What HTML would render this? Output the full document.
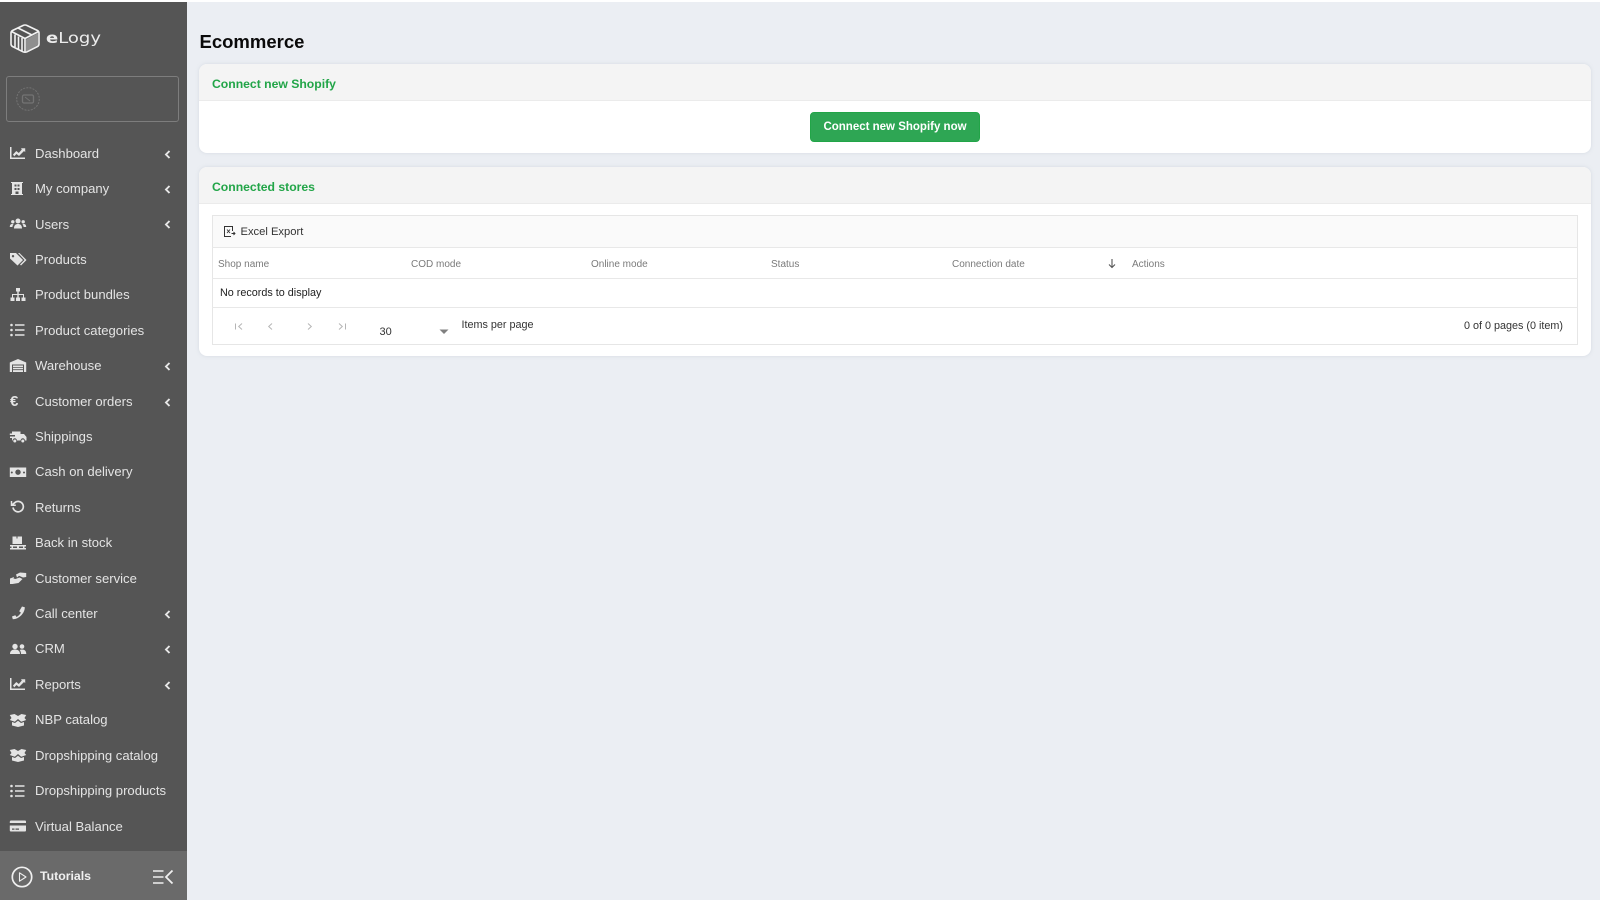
<!DOCTYPE html>
<html><head><meta charset="utf-8"><title>Ecommerce</title>
<style>
html,body{margin:0;padding:0;width:1600px;height:900px;overflow:hidden;background:#fff;font-family:"Liberation Sans",sans-serif}
#wrap{position:absolute;left:0;top:0;width:1600px;height:900px;filter:blur(.3px)}
#bg{position:absolute;left:187px;top:2px;width:1413px;height:898px;background:#ebeef3}
#side{position:absolute;left:0;top:2px;width:187px;height:898px;background:#555}
.a{position:absolute;white-space:nowrap}
.m{position:absolute;left:35px;margin-top:1px;color:#e4e4e4;font-size:13.1px;line-height:16px;white-space:nowrap}
.i{position:absolute;left:9px;width:18px;height:18px;fill:#e4e4e4;stroke:none}
.c{position:absolute;left:164px;width:7px;height:9px;fill:none;stroke:#e8e8e8;stroke-width:1.9}
.card{position:absolute;left:199px;width:1392px;background:#fff;border-radius:8px;box-shadow:0 0 3px rgba(190,198,210,.5);overflow:hidden}
.ch{position:absolute;left:0;top:0;width:100%;background:#f4f4f4;border-bottom:1px solid #ebebeb;box-sizing:border-box}
.g{color:#22a548;font-size:12.2px;font-weight:bold;line-height:16px;position:absolute;white-space:nowrap}
.h{position:absolute;font-size:10px;color:#7a7a7a;line-height:12px;white-space:nowrap}
.l{position:absolute;background:#e8e8e8;height:1px;left:212px;width:1366px}
</style></head><body>
<div id="wrap">
<div id="bg"></div>
<div id="side"></div>

<svg class="a" style="left:9px;top:23px" width="32" height="31" viewBox="0 0 32 31" fill="none" stroke="#f2f2f2" stroke-width="1.600" stroke-linejoin="round"><path d="M17 16.500 29 10V22L17 28.500Z" fill="#8f8f8f" stroke="none"/><path d="M14 2.500Q16 1.500 18 2.500L28.500 7.500Q30 8.300 30 10V21Q30 22.700 28.500 23.500L18 28.800Q16 29.700 14 28.800L3.500 23.500Q2 22.700 2 21V10Q2 8.300 3.500 7.500Z"/><path d="M2.500 8.500 16 15.500 29.500 8.500M16 15.500V29"/><path d="M9 5 23 12M6 11.500V24M9.500 13.500V26M13 15V28"/></svg>
<div class="a" style="left:46px;top:28px;font-family:'DejaVu Sans',sans-serif;color:#ececec;font-size:15.500px;line-height:20px;transform-origin:0 50%;transform:scaleX(1.160)"><b>e</b>Logy</div>

<div class="a" style="left:6px;top:76px;width:173px;height:46px;box-sizing:border-box;border:1px solid #7d7d7d;border-radius:3px"></div>
<svg class="a" style="left:15px;top:87px" width="26" height="26" viewBox="0 0 26 26" fill="none" stroke="#737373"><circle cx="13" cy="12" r="11.300" stroke-dasharray="2 1.200"/><rect x="7.500" y="8" width="11" height="8" rx="1.500" stroke-width="1.300"/><path d="M10 10l5 4" /></svg>

<div class="m" style="top:145px">Dashboard</div>
<svg class="i" style="top:144px" viewBox="0 0 18 18"><path d="M1 3h1.500v10.500H16V15H1Z"/><path d="M4 10.500 7.300 7l2.500 2 3-3.500L12 4.300h4.200v3.800L15 7l-5 5-2.500-2-2.300 2.400Z"/></svg>
<svg class="c" style="top:150px" viewBox="0 0 7 9"><path d="M5.500 1 2 4.500 5.500 8"/></svg>

<div class="m" style="top:180px">My company</div>
<svg class="i" style="top:180px" viewBox="0 0 18 18"><path fill-rule="evenodd" d="M2 2h12v1H13v11h1v1H2v-1h1V3H2ZM5.500 4.500v2h2v-2Zm3 0v2h2v-2Zm-3 3.500v2h2V8Zm3 0v2h2V8ZM6.500 11.500V14h3v-2.500Z"/></svg>
<svg class="c" style="top:185px" viewBox="0 0 7 9"><path d="M5.500 1 2 4.500 5.500 8"/></svg>

<div class="m" style="top:216px">Users</div>
<svg class="i" style="top:215px" viewBox="0 0 18 18"><circle cx="9" cy="6" r="2.500"/><circle cx="3.800" cy="6.800" r="1.700"/><circle cx="14.200" cy="6.800" r="1.700"/><path d="M5 13.500c0-3.300 1.700-4.500 4-4.500s4 1.200 4 4.500ZM.8 12c0-2 .9-3 2.400-3 .6 0 1 .2 1.400.4-.7.700-1.100 1.500-1.200 2.600ZM17.200 12c0-2-.9-3-2.400-3-.6 0-1 .2-1.400.4.700.700 1.100 1.500 1.200 2.600Z"/></svg>
<svg class="c" style="top:220px" viewBox="0 0 7 9"><path d="M5.500 1 2 4.500 5.500 8"/></svg>

<div class="m" style="top:251px">Products</div>
<svg class="i" style="top:250px" viewBox="0 0 18 18"><path fill-rule="evenodd" d="M1 3h6l7 7-5.500 5.500L1 8.500ZM4 5a1.200 1.200 0 1 0 .01 0Z"/><path d="M9 3h1.500l7 7-5.500 5.500-1-1L15.500 10Z"/></svg>

<div class="m" style="top:286px">Product bundles</div>
<svg class="i" style="top:286px" viewBox="0 0 18 18"><path d="M7 2h4v3.500H9.700V8H15v3.500h1.500V15h-4v-3.500H14V9H9.700v2.500H11V15H7v-3.500h1.300V9H4v2.500h1.500V15h-4v-3.500H3V8h5.300V5.500H7Z"/></svg>

<div class="m" style="top:322px">Product categories</div>
<svg class="i" style="top:321px" viewBox="0 0 18 18"><circle cx="2.500" cy="4" r="1.300"/><circle cx="2.500" cy="9" r="1.300"/><circle cx="2.500" cy="14" r="1.300"/><path d="M6 3.200h9.500v1.600H6ZM6 8.200h9.500v1.600H6ZM6 13.200h9.500v1.600H6Z"/></svg>

<div class="m" style="top:357px">Warehouse</div>
<svg class="i" style="top:357px" viewBox="0 0 18 18"><path fill-rule="evenodd" d="M.8 5.500 9 2l8.200 3.500V15H15V7.500H3V15H.8ZM4 8.500h10V10H4Zm0 2.300h10v1.500H4Zm0 2.300h10V15H4Z"/></svg>
<svg class="c" style="top:362px" viewBox="0 0 7 9"><path d="M5.500 1 2 4.500 5.500 8"/></svg>

<div class="a" style="left:10px;top:393px;color:#e4e4e4;font-size:15px;font-weight:bold;line-height:18px">€</div>
<div class="m" style="top:393px">Customer orders</div>
<svg class="c" style="top:398px" viewBox="0 0 7 9"><path d="M5.500 1 2 4.500 5.500 8"/></svg>

<div class="m" style="top:428px">Shippings</div>
<svg class="i" style="top:428px" viewBox="0 0 18 18"><path d="M3 3.500h8.500V6H15l2.500 3v3.500H16a2.200 2.200 0 0 0-4.400 0H8a2.200 2.200 0 0 0-4.400 0H3V10H1V8.500h5V7H.8V5.500H3Z"/><circle cx="5.800" cy="13" r="1.500"/><circle cx="13.800" cy="13" r="1.500"/></svg>

<div class="m" style="top:463px">Cash on delivery</div>
<svg class="i" style="top:463px" viewBox="0 0 18 18"><path fill-rule="evenodd" d="M.8 4.500h16.400v9.500H.8ZM9 6.500a2.700 2.700 0 1 0 .01 0ZM2.800 8.500a1 1 0 1 0 .01 0ZM15 8.500a1 1 0 1 0 .01 0Z"/></svg>

<div class="m" style="top:499px">Returns</div>
<svg class="i" style="top:498px;fill:none;stroke:#e4e4e4;stroke-width:1.700" viewBox="0 0 18 18"><path d="M4 9.500A5.200 5.200 0 1 0 5.700 4.700L3 7"/><path d="M2.500 3V7.300H6.800" stroke-width="1.500"/></svg>

<div class="m" style="top:534px">Back in stock</div>
<svg class="i" style="top:534px" viewBox="0 0 18 18"><path d="M3.500 2.500h4v2h1v-2h4.500v7.500H3.500ZM1 11h16v1.500h-1.500V14H17v1.500H1V14h1.500v-1.500H1Zm3 1.500V14h4v-1.500Zm6 0V14h4v-1.500Z"/></svg>

<div class="m" style="top:570px">Customer service</div>
<svg class="i" style="top:569px" viewBox="0 0 18 18"><path d="M7 5.500 11 3.500l6.200 .5V8L14 8.500 10 6.800 8 8.500Z"/><path d="M1 9.500 5 8 4.500 9.500 6.500 10l4-1.500 3 1.500L9.500 14l-6 1H1Z"/></svg>

<div class="m" style="top:605px">Call center</div>
<svg class="i" style="top:604px" viewBox="0 0 18 18"><path d="M13 2.500l2.800.7c0 6-5.800 12-12 12L3 12.500l3.300-1.200 1.300 1.700c1.700-1 3.400-2.700 4.300-4.400L10.200 7.200Z"/></svg>
<svg class="c" style="top:610px" viewBox="0 0 7 9"><path d="M5.500 1 2 4.500 5.500 8"/></svg>

<div class="m" style="top:640px">CRM</div>
<svg class="i" style="top:640px" viewBox="0 0 18 18"><circle cx="6" cy="6.500" r="2.700"/><circle cx="13" cy="6.500" r="2.300"/><path d="M1 14c0-3 2-4.500 5-4.500s5 1.500 5 4.500ZM12 14c0-1.700-.4-3-1.400-4 .7-.3 1.500-.5 2.400-.5 2.700 0 4.300 1.500 4.300 4.500Z"/></svg>
<svg class="c" style="top:645px" viewBox="0 0 7 9"><path d="M5.500 1 2 4.500 5.500 8"/></svg>

<div class="m" style="top:676px">Reports</div>
<svg class="i" style="top:675px" viewBox="0 0 18 18"><path d="M1 3h1.500v10.500H16V15H1Z"/><path d="M4 10.500 7.300 7l2.500 2 3-3.500L12 4.300h4.200v3.800L15 7l-5 5-2.500-2-2.300 2.400Z"/></svg>
<svg class="c" style="top:681px" viewBox="0 0 7 9"><path d="M5.500 1 2 4.500 5.500 8"/></svg>

<div class="m" style="top:711px">NBP catalog</div>
<svg class="i" style="top:711px" viewBox="0 0 18 18"><path d="M.8 4 5.500 3 9 5l3.500-2 4.700 1-1.700 3 1.700 2-5 1.700L9 8l-3.200 2.700L.8 9l1.700-2ZM3 11l3 1 3-2.200 3 2.200 3-1v3.500L9 16l-6-1.500Z"/></svg>

<div class="m" style="top:747px">Dropshipping catalog</div>
<svg class="i" style="top:746px" viewBox="0 0 18 18"><path d="M.8 4 5.500 3 9 5l3.500-2 4.700 1-1.700 3 1.700 2-5 1.700L9 8l-3.200 2.700L.8 9l1.700-2ZM3 11l3 1 3-2.200 3 2.200 3-1v3.500L9 16l-6-1.500Z"/></svg>

<div class="m" style="top:782px">Dropshipping products</div>
<svg class="i" style="top:782px" viewBox="0 0 18 18"><circle cx="2.500" cy="4" r="1.300"/><circle cx="2.500" cy="9" r="1.300"/><circle cx="2.500" cy="14" r="1.300"/><path d="M6 3.200h9.500v1.600H6ZM6 8.200h9.500v1.600H6ZM6 13.200h9.500v1.600H6Z"/></svg>

<div class="m" style="top:818px">Virtual Balance</div>
<svg class="i" style="top:817px" viewBox="0 0 18 18"><path fill-rule="evenodd" d="M1.500 3.500h14.500a1 1 0 0 1 1 1V6H.8V4.500ZM.8 8.500H17v5a1 1 0 0 1-1 1H1.800a1 1 0 0 1-1-1ZM3 11.500v1.200h2.500v-1.200Zm3.500 0v1.200H10v-1.200Z"/></svg>

<div class="a" style="left:0;top:851px;width:187px;height:49px;background:#6a6a6a"></div>
<svg class="a" style="left:10px;top:865px" width="24" height="24" viewBox="0 0 24 24" fill="none" stroke="#f0f0f0"><circle cx="12" cy="12" r="9.700" stroke-width="1.700"/><path d="M9.500 7.800 16 12l-6.500 4.200Z" stroke-width="1.100" stroke-linejoin="round"/></svg>
<div class="a" style="left:40px;top:868px;color:#f0f0f0;font-size:12.300px;font-weight:bold;line-height:16px">Tutorials</div>
<svg class="a" style="left:153px;top:869px" width="21" height="16" viewBox="0 0 21 16" fill="none" stroke="#f0f0f0" stroke-width="1.500"><path d="M0 2h10.500M0 8h10.500M0 14h10.500"/><path d="M19.500 1.500 13 8l6.500 6.500" stroke-width="1.800"/></svg>

<div class="a" style="left:199.500px;top:30px;font-size:18.500px;font-weight:bold;color:#0a0a0a;line-height:24px">Ecommerce</div>

<div class="card" style="top:64px;height:89px"><div class="ch" style="height:37px"></div></div>
<div class="g" style="left:212px;top:76px">Connect new Shopify</div>
<div class="a" style="left:810px;top:112px;width:170px;height:30px;box-sizing:border-box;background:#2ea654;border:1px solid #22a548;border-radius:4px;color:#fff;font-size:11.500px;font-weight:bold;line-height:28px;text-align:center">Connect new Shopify now</div>

<div class="card" style="top:167px;height:189px"><div class="ch" style="height:37px"></div></div>
<div class="g" style="left:212px;top:179px">Connected stores</div>

<div class="a" style="left:212px;top:215px;width:1366px;height:130px;box-sizing:border-box;border:1px solid #e6e6e6"></div>
<div class="a" style="left:213px;top:216px;width:1364px;height:31px;background:#fafafa"></div>
<div class="l" style="top:247px"></div>
<div class="l" style="top:278px"></div>
<div class="l" style="top:307px"></div>

<svg class="a" style="left:223px;top:225px" width="13" height="13" viewBox="0 0 13 13" fill="none" stroke="#333" stroke-width="1"><path d="M9.500 6V1.500H1.500V11.500H8"/><path d="M4 4.500l3 3.500M7 4.500 4 8" stroke-width=".9"/><path d="M8.500 8.500h3.500M10.500 7l1.500 1.500L10.500 10" stroke-width=".9"/></svg>
<div class="a" style="left:240.500px;top:225px;font-size:11.200px;color:#333;line-height:15px">Excel Export</div>

<div class="h" style="left:218px;top:257px;margin-top:2px">Shop name</div>
<div class="h" style="left:411px;top:259px">COD mode</div>
<div class="h" style="left:591px;top:259px">Online mode</div>
<div class="h" style="left:771px;top:259px">Status</div>
<div class="h" style="left:952px;top:259px">Connection date</div>
<svg class="a" style="left:1107px;top:258px" width="10" height="11" viewBox="0 0 10 11" fill="none" stroke="#555" stroke-width="1.100"><path d="M5 1v8.500M2 6.500l3 3 3-3"/></svg>
<div class="h" style="left:1132px;top:259px">Actions</div>

<div class="a" style="left:220px;top:286px;font-size:10.800px;color:#222;line-height:14px">No records to display</div>

<svg class="a" style="left:233px;top:321px" width="120" height="12" viewBox="0 0 120 12" fill="none" stroke="#b5b5b5" stroke-width="1"><path d="M2.500 2.500v6M9 2.500l-3.300 3L9 8.500"/><path d="M39 2.500l-3.300 3 3.300 3"/><path d="M75 2.500l3.300 3-3.300 3"/><path d="M106 2.500l3.300 3-3.300 3M112.500 2.500v6"/></svg>
<div class="a" style="left:379.500px;top:325px;font-size:11px;color:#333;line-height:14px">30</div>
<svg class="a" style="left:439px;top:329px" width="10" height="6" viewBox="0 0 10 6"><path d="M.5 .5h9L5 5Z" fill="#808080"/></svg>
<div class="a" style="left:461.500px;top:318px;font-size:10.800px;color:#333;line-height:14px">Items per page</div>
<div class="a" style="right:37px;top:319px;font-size:10.800px;color:#333;line-height:14px">0 of 0 pages (0 item)</div>
</div>
</body></html>
